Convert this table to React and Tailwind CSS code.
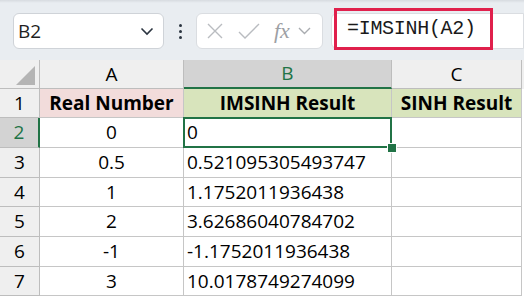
import React from 'react';

const cellFont = { fontFamily: '"Open Sans", "Liberation Sans", sans-serif' };

const rows = [
  { n: 1, a: 'Real Number', b: 'IMSINH Result', c: 'SINH Result', head: true, h: 'h-[29px]' },
  { n: 2, a: '0', b: '0', c: '', h: 'h-[30px]', sel: true },
  { n: 3, a: '0.5', b: '0.521095305493747', c: '', h: 'h-[30px]' },
  { n: 4, a: '1', b: '1.1752011936438', c: '', h: 'h-[29px]' },
  { n: 5, a: '2', b: '3.62686040784702', c: '', h: 'h-[30px]' },
  { n: 6, a: '-1', b: '-1.1752011936438', c: '', h: 'h-[30px]' },
  { n: 7, a: '3', b: '10.0178749274099', c: '', h: 'h-[29px]' },
];

function Toolbar() {
  return (
    <div className="relative h-[60px] bg-[#e9edf1] flex items-start pt-[13px] pl-[13px]">
      <div className="absolute top-0 left-0 right-0 h-[3px] bg-gradient-to-b from-[#d7dbe0] to-[#e9edf1]" />
      {/* name box */}
      <div className="w-[151px] h-[36px] bg-white border border-[#cfd3d8] rounded-[6px] flex items-center justify-between pl-[4px] pr-[9px]">
        <span className="text-[19px] text-[#1f1f1f]" style={{ fontFamily: '"Open Sans", sans-serif' }}>B2</span>
        <svg width="14" height="9" viewBox="0 0 14 9" fill="none" stroke="#2b3440" strokeWidth="1.6">
          <path d="M1.5 1.5 L7 7 L12.5 1.5" />
        </svg>
      </div>
      {/* dots */}
      <div className="w-[32px] h-[36px] flex flex-col items-center justify-center gap-[3px]">
        <div className="w-[3px] h-[3px] rounded-full bg-[#2b3440]" />
        <div className="w-[3px] h-[3px] rounded-full bg-[#2b3440]" />
        <div className="w-[3px] h-[3px] rounded-full bg-[#2b3440]" />
      </div>
      {/* cancel / enter / fx */}
      <div className="w-[127px] h-[36px] bg-white border border-[#dadde1] rounded-[6px] flex items-center pl-[9px]">
        <svg width="18" height="18" viewBox="0 0 18 18" fill="none" stroke="#b9bcc0" strokeWidth="1.4">
          <path d="M2 2 L16 16 M16 2 L2 16" />
        </svg>
        <svg className="ml-[14px]" width="22" height="16" viewBox="0 0 22 16" fill="none" stroke="#b9bcc0" strokeWidth="1.4">
          <path d="M1 9 L7 15 L21 1" />
        </svg>
        <span className="ml-[14px] text-[22px] italic text-[#9da0a4] leading-none" style={{ fontFamily: '"Liberation Serif", serif' }}>fx</span>
        <svg className="ml-[8px]" width="13" height="8" viewBox="0 0 13 8" fill="none" stroke="#a9acb0" strokeWidth="1.4">
          <path d="M1 1 L6.5 6.5 L12 1" />
        </svg>
      </div>
      {/* formula input */}
      <div className="ml-[8px] flex-1 h-[36px] bg-white border border-[#dadde1] rounded-l-[6px] relative">
        <div className="absolute left-[2px] top-[-6px] w-[159px] h-[42px] border-[3px] border-[#e0204c] flex items-center pl-[10px]">
          <span className="text-[20px] text-[#1a1a1a] whitespace-nowrap tracking-[-0.3px]" style={{ fontFamily: '"Liberation Mono", monospace' }}>=IMSINH(A2)</span>
        </div>
      </div>
    </div>
  );
}

function Grid() {
  return (
    <div className="grid grid-cols-[40px_144px_208px_130px_2px] text-[19px] text-black" style={cellFont}>
      {/* column headers */}
      <div className="h-[29px] bg-[#efefef] border-r border-b border-[#bdbdbd] relative">
        <svg className="absolute left-[16px] top-[6px]" width="19" height="19" viewBox="0 0 19 19">
          <path d="M19 0 L19 19 L0 19 Z" fill="#b4b4b4" />
        </svg>
      </div>
      <div className="h-[29px] bg-[#efefef] border-r border-b border-[#bdbdbd] flex items-center justify-center">A</div>
      <div className="h-[29px] bg-[#d3d3d3] border-r border-b-2 border-r-[#bdbdbd] border-b-[#217346] flex items-center justify-center text-[#217346]">B</div>
      <div className="h-[29px] bg-[#efefef] border-r border-b border-[#bdbdbd] flex items-center justify-center">C</div>
      <div className="h-[29px] bg-[#efefef]" />

      {rows.map((r) => (
        <React.Fragment key={r.n}>
          <div
            className={`${r.h} flex items-center justify-center border-b border-[#bdbdbd] ${
              r.sel ? 'bg-[#d3d3d3] text-[#217346] border-r-2 border-r-[#217346]' : 'bg-[#efefef] border-r'
            }`}
          >
            {r.n}
          </div>
          <div
            className={`${r.h} flex items-center justify-center border-r border-b border-[#c6c6c6] ${
              r.head ? 'bg-[#f2dcdb] font-bold' : 'bg-white'
            }`}
          >
            {r.a}
          </div>
          <div
            className={`${r.h} relative flex items-center border-r border-b border-[#c6c6c6] ${
              r.head ? 'bg-[#d8e4bc] font-bold justify-center' : 'bg-white pl-[3px]'
            } ${r.sel ? 'z-10' : ''}`}
          >
            {r.b}
            {r.sel && (
              <>
                <div className="absolute left-[-1px] top-[-1px] right-[-1px] bottom-[-1px] border-2 border-[#217346]" />
                <div className="absolute right-[-6px] bottom-[-6px] w-[10px] h-[10px] bg-[#217346] border-[1.5px] border-white" />
              </>
            )}
          </div>
          <div
            className={`${r.h} flex items-center justify-center border-r border-b border-[#c6c6c6] ${
              r.head ? 'bg-[#d8e4bc] font-bold' : 'bg-white'
            }`}
          >
            {r.c}
          </div>
          <div className={`${r.h} bg-white`} />
        </React.Fragment>
      ))}
    </div>
  );
}

export default function App() {
  return (
    <div className="w-[524px] h-[298px] overflow-hidden bg-white">
      <Toolbar />
      <Grid />
    </div>
  );
}
